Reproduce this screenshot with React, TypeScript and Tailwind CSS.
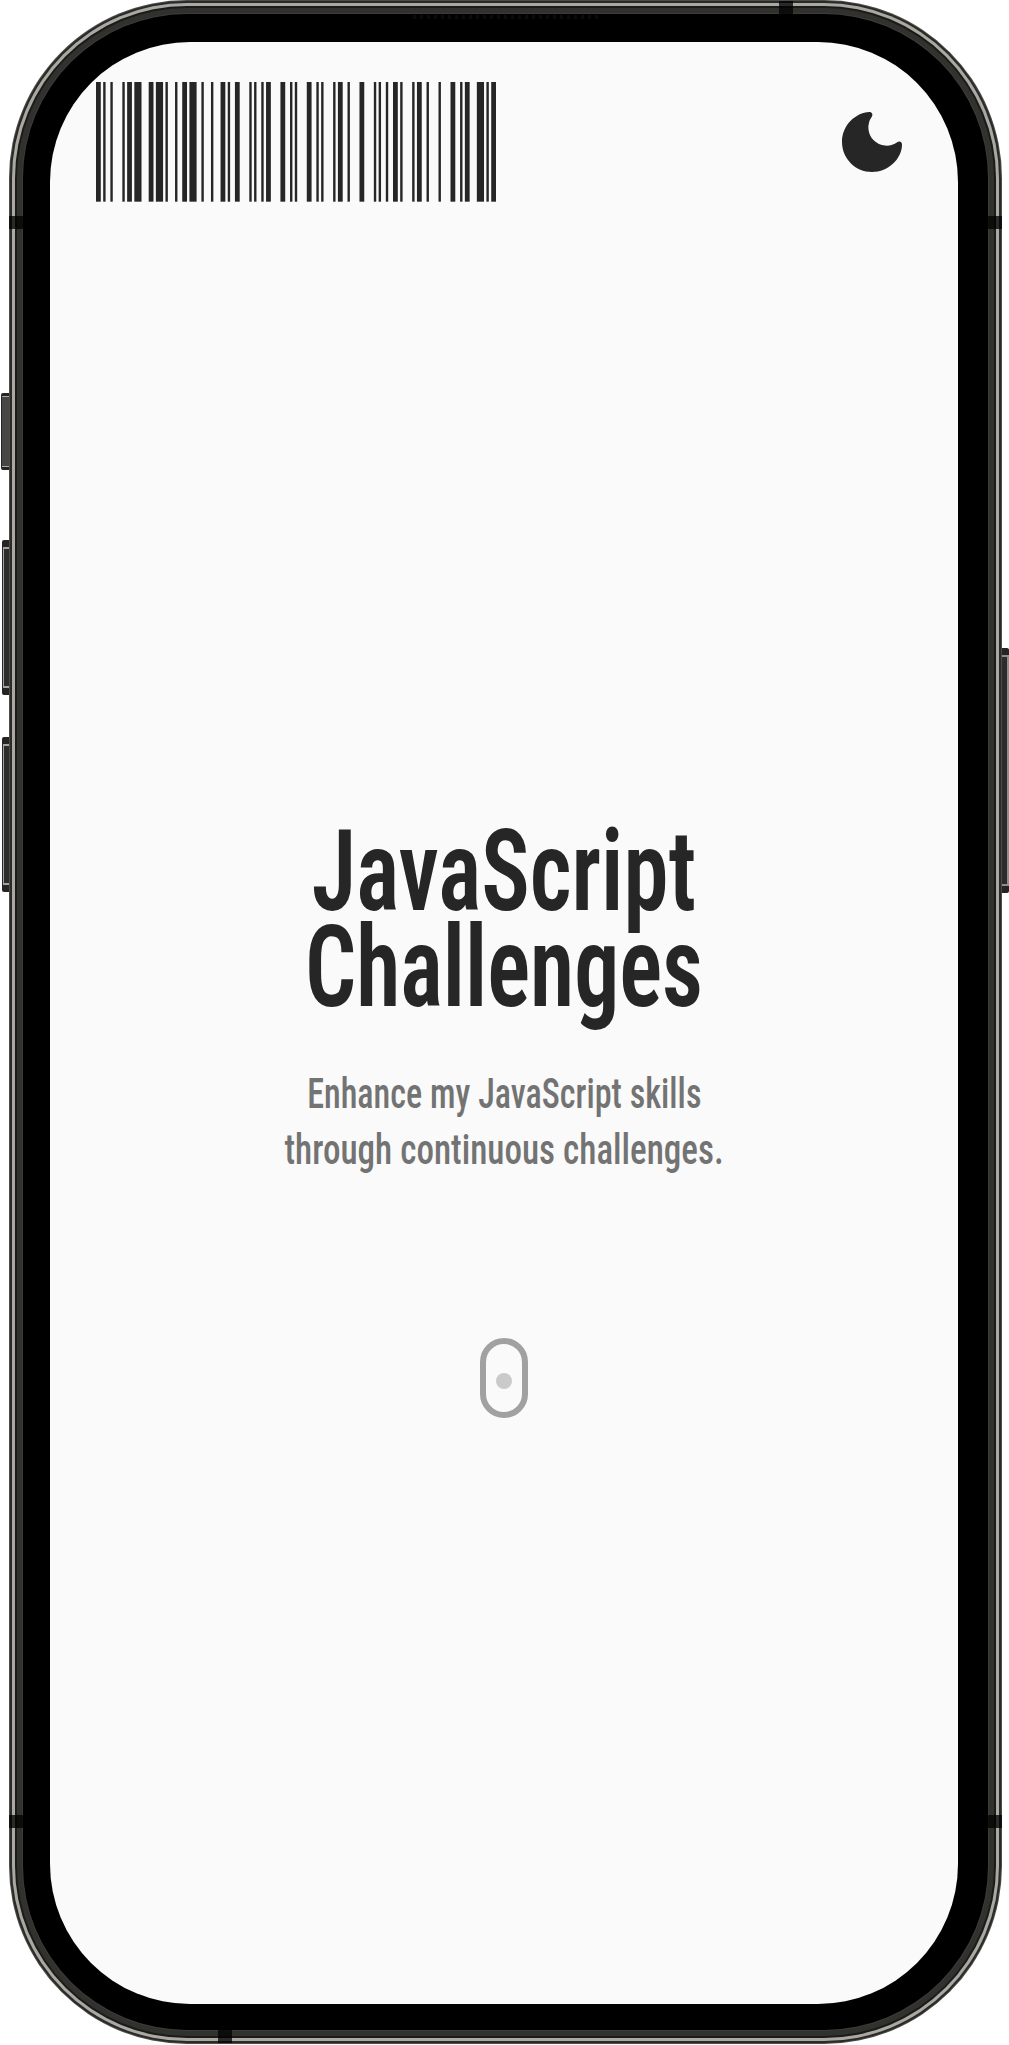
const BARCODE_SYMBOLS = [
  '211214', // start B
  '112133', // J
  '213113', // S
  '122132', // -
  '131321', // C
  '122411', // h
  '121124', // a
  '221114', // l
  '221114', // l
  '112214', // e
  '241112', // n
  '122114', // g
  '112214', // e
  '142211', // checksum
  '2331112', // stop
];

function Barcode() {
  const bars: { x: number; w: number }[] = [];
  let x = 0;
  BARCODE_SYMBOLS.forEach((symbol) => {
    symbol.split('').forEach((digit, i) => {
      const w = Number(digit);
      if (i % 2 === 0) bars.push({ x, w });
      x += w;
    });
  });
  return (
    <svg
      className="h-[119.7px] w-[400px] fill-neutral-800"
      viewBox={`0 0 ${x} 50`}
      preserveAspectRatio="none"
      role="img"
      aria-label="JS-Challenge"
    >
      {bars.map((bar) => (
        <rect key={bar.x} x={bar.x} y={0} width={bar.w} height={50} />
      ))}
    </svg>
  );
}

function MoonIcon() {
  return (
    <svg className="size-[60px] fill-neutral-800" viewBox="0 0 60 60">
      <path d="M30 60C46.6 60 60 46.6 60 32.5C60 30 57.6 28.8 55.2 30.2A18.2 18.2 0 0 1 29.8 4.8C31.2 2.4 30 0 27.5 0C13.4 0.6 0 13.4 0 30C0 46.6 13.4 60 30 60Z" />
    </svg>
  );
}

function ScrollHint() {
  return (
    <div className="mt-[161px] flex h-20 w-12 justify-center rounded-full border-[6px] border-neutral-400">
      <div className="mt-[29.5px] size-4 rounded-full bg-[#cacaca]" />
    </div>
  );
}

function PhoneHardware() {
  return (
    <>
      <div className="absolute top-[393px] left-[1px] h-[77px] w-2 rounded-l-[2px] border-y-[3px] border-l border-[#252523] bg-[#464645]">
        <div className="h-full border-y border-[#aaa9a5]" />
      </div>
      <div className="absolute top-[540px] left-[2px] h-[155px] w-[7px] rounded-l-[2px] border-y-[7px] border-l border-[#252523] bg-[#2b2c2b]">
        <div className="h-full border-y-2 border-l border-[#a5a39e]" />
      </div>
      <div className="absolute top-[737px] left-[2px] h-[155px] w-[7px] rounded-l-[2px] border-y-[7px] border-l border-[#252523] bg-[#2b2c2b]">
        <div className="h-full border-y-2 border-l border-[#a5a39e]" />
      </div>
      <div className="absolute top-[648px] left-[1002px] h-[245px] w-[7px] rounded-r-[2px] border-y-[7px] border-[#252523] bg-[#2b2c2b]">
        <div className="h-full border-y-2 border-r-2 border-[#8f8e8a]" />
      </div>
      <div className="absolute top-[216px] left-[9px] h-[13px] w-[14px] bg-black/75" />
      <div className="absolute top-[216px] left-[988px] h-[13px] w-[14px] bg-black/75" />
      <div className="absolute top-[1815px] left-[9px] h-[13px] w-[14px] bg-black/75" />
      <div className="absolute top-[1815px] left-[988px] h-[13px] w-[14px] bg-black/75" />
      <div className="absolute top-[1px] left-[779px] h-[13px] w-[14px] bg-black/75" />
      <div className="absolute top-[2030px] left-[218px] h-[13px] w-[14px] bg-black/75" />
      <div className="absolute top-[15px] left-[413px] h-[4px] w-[186px] bg-[repeating-linear-gradient(90deg,#0b0b0b_0_3px,#000_3px_7px)]" />
    </>
  );
}

export default function App() {
  return (
    <div className="relative h-[2045px] w-[1009px] overflow-hidden bg-white pl-[9px] font-['Roboto',sans-serif]">
      <div className="h-[2044px] w-[993px] rounded-[178px] bg-[#4c4d49] p-px">
        <div className="size-full rounded-[177px] bg-[#2a2a28] p-[2px]">
          <div className="size-full rounded-[175px] bg-[#aaa8a1] p-[3px]">
            <div className="size-full rounded-[172px] bg-[#1b1b1a] p-[2px]">
              <div className="size-full rounded-[170px] bg-[#31322e] p-[5px]">
                <div className="size-full rounded-[165px] bg-[#3c3d3a] p-px">
                  <div className="size-full rounded-[164px] bg-black px-[27px] pt-[28px] pb-[26px]">
                    <main className="flex h-[1962px] w-[908px] flex-col rounded-[140px] bg-neutral-50">
                      <header className="flex items-start justify-between pt-10 pr-14 pl-[46px]">
                        <Barcode />
                        <button className="mt-[30px]" aria-label="Toggle dark mode">
                          <MoonIcon />
                        </button>
                      </header>
                      <section className="mt-[622px] flex flex-col items-center">
                        <h1 className="flex flex-col items-center text-[113px] leading-[96px] font-semibold whitespace-nowrap text-neutral-800 [font-stretch:75%]">
                          <span className="scale-x-[.804]">JavaScript</span>
                          <span className="scale-x-[.796]">Challenges</span>
                        </h1>
                        <p className="mt-[49px] flex flex-col items-center text-[43px] leading-[56px] font-medium whitespace-nowrap text-neutral-500 [font-stretch:75%]">
                          <span className="scale-x-[.794]">Enhance my JavaScript skills</span>
                          <span className="scale-x-[.816]">through continuous challenges.</span>
                        </p>
                        <ScrollHint />
                      </section>
                    </main>
                  </div>
                </div>
              </div>
            </div>
          </div>
        </div>
      </div>
      <PhoneHardware />
    </div>
  );
}
